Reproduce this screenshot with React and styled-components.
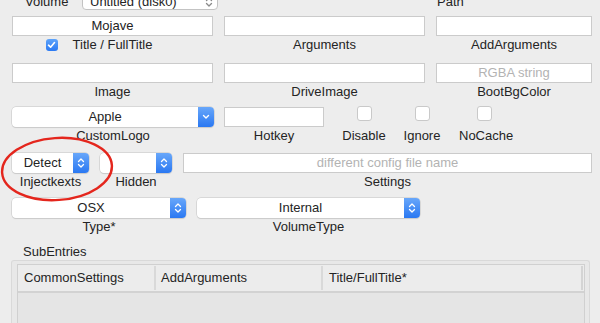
import React from 'react';
import styled, { createGlobalStyle } from 'styled-components';

const GlobalStyle = createGlobalStyle`
    html, body {
        margin: 0;
        padding: 0;
        background: #ededed;
        overflow: hidden;
    }
    body {
        font-family: 'Liberation Sans', Arial, sans-serif;
        font-size: 13px;
        color: #242424;
    }
`;

const Page = styled.div`
    position: relative;
    width: 600px;
    height: 323px;
    overflow: hidden;
    display: flex;
    flex-direction: column;
`;

const TopBar = styled.div`
    display: flex;
    align-items: center;
    height: 17px;
    margin-top: -7px;
    padding-left: 25px;
`;

const TopLabel = styled.span`
    width: ${props => props.width}px;
    line-height: 17px;
    margin-left: ${props => props.offset || 0}px;
`;

const VolumePopup = styled.div`
    width: 136px;
    height: 17px;
    box-sizing: border-box;
    border: 1px solid #c3c3c3;
    border-radius: 4px;
    background: #fff;
    display: flex;
    align-items: center;
    justify-content: space-between;
    padding: 0 4px 0 7px;
    line-height: 15px;
`;

const Row = styled.div`
    display: flex;
    align-items: flex-start;
    padding-left: 12px;
    margin-top: ${props => props.top}px;
`;

const Cell = styled.div`
    width: ${props => props.width}px;
    margin-left: ${props => props.offset || 0}px;
    display: flex;
    flex-direction: column;
    align-items: stretch;
`;

const Label = styled.div`
    margin-top: 1px;
    line-height: 16px;
    text-align: center;
    white-space: nowrap;
`;

const CheckLabel = styled.div`
    margin-top: 1px;
    line-height: 16px;
    display: grid;
    grid-template-columns: 1fr auto 1fr;
    align-items: center;
    white-space: nowrap;
`;

const Field = styled.div`
    height: 20px;
    box-sizing: border-box;
    background: #fff;
    border: 1px solid #cbcbcb;
    text-align: center;
    line-height: 18px;
    color: ${props => (props.placeholder ? '#b3b3b3' : '#222')};
`;

const Popup = styled.div`
    height: 20px;
    box-sizing: border-box;
    display: flex;
    border-radius: 4px;
    background: #fff;
    box-shadow: 0 0 0 0.5px #c4c4c4, 0 1px 1px rgba(0, 0, 0, 0.12);
    overflow: hidden;
`;

const PopupText = styled.div`
    flex: 1;
    text-align: center;
    line-height: 20px;
`;

const PopupArrow = styled.div`
    width: 16px;
    background: linear-gradient(#68a7fa, #2a78f2);
    display: flex;
    align-items: center;
    justify-content: center;
`;

const BoxWrap = styled.div`
    height: 20px;
    display: flex;
    justify-content: center;
`;

const Box = styled.div`
    width: 15px;
    height: 15px;
    margin-top: -1px;
    box-sizing: border-box;
    border-radius: 3px;
    background: #fff;
    border: 1px solid #c9c9c9;
`;

const Checked = styled.div`
    justify-self: end;
    width: 12px;
    height: 12px;
    margin-right: 15px;
    margin-top: -1px;
    border-radius: 3px;
    background: linear-gradient(#5ea4fa, #2b7af3);
    display: flex;
    align-items: center;
    justify-content: center;
`;

const SectionTitle = styled.div`
    margin: 9px 0 0 23px;
    line-height: 16px;
`;

const TableBox = styled.div`
    flex: 1;
    margin: 0 10px 0 11px;
    border: 1px solid #d9d9d9;
    border-bottom: none;
    border-radius: 3px 3px 0 0;
    background: #e8e8e8;
    padding: 3px 4px 0 5px;
    display: flex;
`;

const TableInner = styled.div`
    flex: 1;
    border: 1px solid #d0d0d0;
    border-bottom: none;
    background: #e5e5e5;
`;

const Header = styled.div`
    display: flex;
    height: 26px;
    background: #ececec;
    border-bottom: 2px solid #d2d2d2;
`;

const Column = styled.div`
    width: ${props => props.width ? props.width + 'px' : 'auto'};
    flex: ${props => props.width ? 'none' : 1};
    box-sizing: border-box;
    padding-left: ${props => props.pad}px;
    border-right: ${props => props.divider ? '2px solid #d9d9d9' : 'none'};
    margin: ${props => props.divider ? '1px 0' : '0'};
    line-height: ${props => props.divider ? '24px' : '26px'};
`;

const EdgeStub = styled.div`
    width: 2px;
    margin: 1px 1px 1px 0;
    background: #d4d4d4;
`;

const Annotation = styled.svg`
    position: absolute;
    left: 0;
    top: 134px;
    pointer-events: none;
`;

const UpDown = ({ color = '#fff' }) => (
    <svg width="8" height="12" viewBox="0 0 8 12">
        <path d="M1.5 4.5 L4 2 L6.5 4.5 M1.5 7.5 L4 10 L6.5 7.5" fill="none" stroke={color} strokeWidth="1.3" strokeLinecap="round" strokeLinejoin="round" />
    </svg>
);

const Down = () => (
    <svg width="8" height="6" viewBox="0 0 8 6">
        <path d="M1.5 1.5 L4 4 L6.5 1.5" fill="none" stroke="#fff" strokeWidth="1.4" strokeLinecap="round" strokeLinejoin="round" />
    </svg>
);

const Select = ({ value, single }) => (
    <Popup>
        <PopupText>{value}</PopupText>
        <PopupArrow>{single ? <Down /> : <UpDown />}</PopupArrow>
    </Popup>
);

const Check = ({ label, offset }) => (
    <Cell width={50} offset={offset}>
        <BoxWrap><Box /></BoxWrap>
        <Label>{label}</Label>
    </Cell>
);

export default function App() {
    return (
        <Page>
            <GlobalStyle />
            <TopBar>
                <TopLabel width={57}>Volume</TopLabel>
                <VolumePopup>
                    <span>Untitled (disk0)</span>
                    <UpDown color="#8a8a8a" />
                </VolumePopup>
                <TopLabel width={40} offset={219}>Path</TopLabel>
            </TopBar>

            <Row top={6}>
                <Cell width={201}>
                    <Field>Mojave</Field>
                    <CheckLabel>
                        <Checked>
                            <svg width="9" height="8" viewBox="0 0 9 8">
                                <path d="M1.5 4.2 L3.6 6.2 L7.5 1.5" fill="none" stroke="#fff" strokeWidth="1.6" strokeLinecap="round" strokeLinejoin="round" />
                            </svg>
                        </Checked>
                        <span>Title / FullTitle</span>
                        <span />
                    </CheckLabel>
                </Cell>
                <Cell width={201} offset={11}>
                    <Field />
                    <Label>Arguments</Label>
                </Cell>
                <Cell width={156} offset={11}>
                    <Field />
                    <Label>AddArguments</Label>
                </Cell>
            </Row>

            <Row top={10}>
                <Cell width={201}>
                    <Field />
                    <Label>Image</Label>
                </Cell>
                <Cell width={201} offset={11}>
                    <Field />
                    <Label>DriveImage</Label>
                </Cell>
                <Cell width={156} offset={11}>
                    <Field placeholder>RGBA string</Field>
                    <Label>BootBgColor</Label>
                </Cell>
            </Row>

            <Row top={7}>
                <Cell width={202}>
                    <Select value="Apple" single />
                    <Label>CustomLogo</Label>
                </Cell>
                <Cell width={100} offset={10}>
                    <Field />
                    <Label>Hotkey</Label>
                </Cell>
                <Check label="Disable" offset={15} />
                <Check label="Ignore" offset={8} />
                <Check label="NoCache" offset={12} />
            </Row>

            <Row top={9}>
                <Cell width={77}>
                    <Select value="Detect" />
                    <Label>Injectkexts</Label>
                </Cell>
                <Cell width={72} offset={11}>
                    <Select value="" />
                    <Label>Hidden</Label>
                </Cell>
                <Cell width={409} offset={11}>
                    <Field placeholder>different config file name</Field>
                    <Label>Settings</Label>
                </Cell>
            </Row>

            <Row top={8}>
                <Cell width={174}>
                    <Select value="OSX" />
                    <Label>Type*</Label>
                </Cell>
                <Cell width={223} offset={11}>
                    <Select value="Internal" />
                    <Label>VolumeType</Label>
                </Cell>
            </Row>

            <SectionTitle>SubEntries</SectionTitle>
            <TableBox>
                <TableInner>
                    <Header>
                        <Column width={138} pad={6} divider>CommonSettings</Column>
                        <Column width={167} pad={5} divider>AddArguments</Column>
                        <Column pad={6}>Title/FullTitle*</Column>
                        <EdgeStub />
                    </Header>
                </TableInner>
            </TableBox>

            <Annotation width="120" height="76" viewBox="0 0 120 76">
                <ellipse cx="57" cy="35" rx="55" ry="31" fill="none" stroke="#e4261d" strokeWidth="2.4" transform="rotate(-4 57 35)" />
            </Annotation>
        </Page>
    );
}
